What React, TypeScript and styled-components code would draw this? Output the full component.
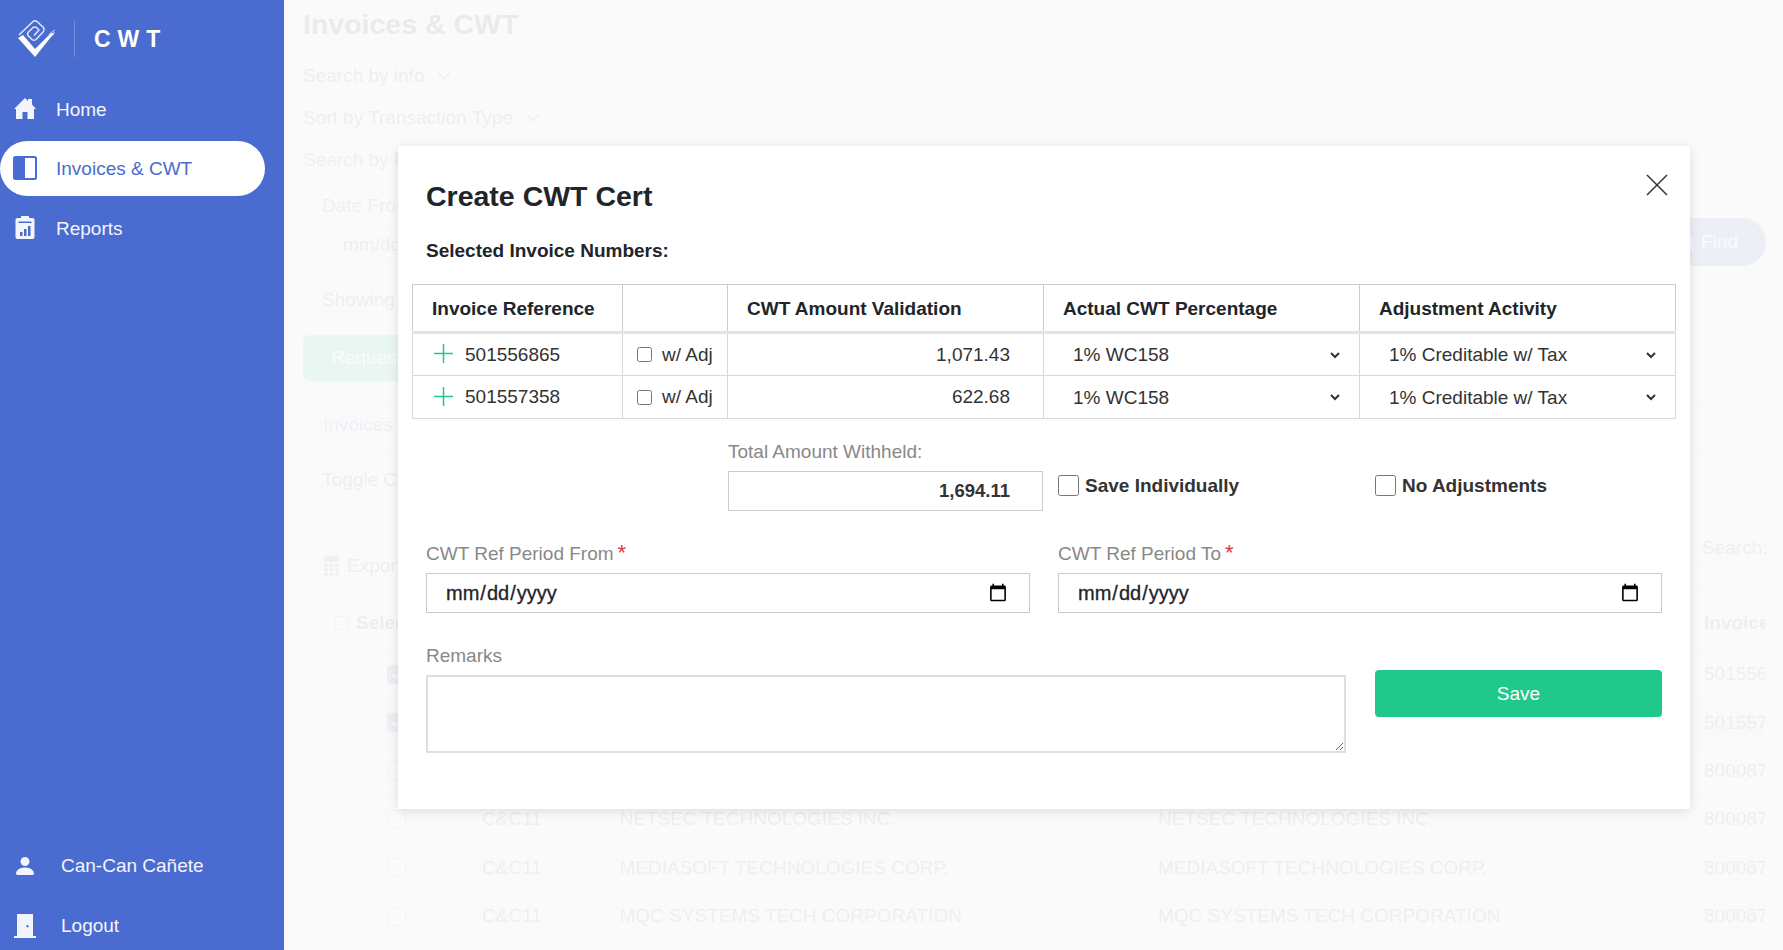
import React from "react";
import styled, { createGlobalStyle } from "styled-components";
import { BsPersonFill } from "react-icons/bs";
import { FiChevronDown, FiSearch } from "react-icons/fi";

const BLUE = "#4a6bcf";
const GREEN = "#20c98b";

const GlobalStyle = createGlobalStyle`
  html, body {
    margin: 0;
    padding: 0;
    height: 950px;
    overflow: hidden;
    background: #fff;
    font-family: "Liberation Sans", Arial, sans-serif;
    font-size: 19px;
    color: #212529;
  }
  * { box-sizing: border-box; }
`;

const Root = styled.div`
  display: flex;
  width: 1783px;
  height: 950px;
`;

const Sidebar = styled.aside`
  width: 284px;
  flex: none;
  height: 950px;
  display: flex;
  flex-direction: column;
  background: ${BLUE};
  color: #f3f5fc;
`;

const Brand = styled.div`
  height: 82px;
  display: flex;
  align-items: center;
  padding: 0 0 4px 16px;
`;

const BrandDivider = styled.div`
  width: 1px;
  height: 36px;
  margin: 0 19px 0 18px;
  background: rgba(255, 255, 255, 0.25);
`;

const BrandName = styled.div`
  font-size: 23px;
  font-weight: 700;
  letter-spacing: 7px;
  color: #fff;
`;

const NavList = styled.nav`
  display: flex;
  flex-direction: column;
  gap: 4.5px;
`;

const BottomNav = styled.div`
  margin-top: auto;
  display: flex;
  flex-direction: column;
  gap: 12px;
`;

const NavItem = styled.div<{ $active?: boolean; $bottom?: boolean }>`
  width: 265px;
  height: ${(p) => (p.$bottom ? "48px" : "55px")};
  display: flex;
  align-items: center;
  gap: ${(p) => (p.$bottom ? "24px" : "19px")};
  padding-left: 13px;
  padding-top: ${(p) => (p.$active ? "2px" : "0")};
  margin: ${(p) => (p.$active ? "-1px 0 1px" : "0")};
  background: ${(p) => (p.$active ? "#fff" : "transparent")};
  color: ${(p) => (p.$active ? BLUE : "inherit")};
  border-radius: 28px;

  > svg {
    width: 24px;
    height: 24px;
    flex: none;
    margin-top: ${(p) => (p.$active ? "-2px" : p.$bottom ? "-1px" : "-3px")};
  }
`;

const Main = styled.main`
  position: relative;
  flex: 1;
  height: 950px;
  overflow: hidden;
  background: #fff;
  padding: 6px 18px 0 19px;
`;

const PageTitle = styled.h1`
  margin: 0 0 13px;
  font-size: 28.5px;
  line-height: 36px;
  font-weight: 700;
`;

const FilterToggle = styled.div<{ $blue?: boolean }>`
  height: 42px;
  display: flex;
  align-items: center;
  gap: 9px;
  color: ${(p) => (p.$blue ? BLUE : "#555")};

  > svg {
    width: 22px;
    height: 22px;
    stroke-width: 1.4;
  }
`;

const DateRow = styled.div`
  display: flex;
  justify-content: space-between;
  align-items: flex-end;
  padding-left: 19px;
  margin-top: 14px;
  margin-right: -1px;
`;

const FieldLabel = styled.div`
  line-height: 22px;
  margin-bottom: 9px;
  color: #666;
`;

const BgInput = styled.div`
  width: 300px;
  height: 38px;
  margin-bottom: 2px;
  padding-left: 20px;
  display: flex;
  align-items: center;
  border: 1px solid #ccc;
  color: #555;
`;

const FindButton = styled.div`
  width: 130px;
  height: 48px;
  padding-right: 28px;
  display: flex;
  align-items: center;
  justify-content: flex-end;
  gap: 5px;
  border-radius: 24px;
  background: ${BLUE};
  color: #fff;
`;

const ShowingText = styled.div`
  margin: 23px 0 0 19px;
  line-height: 22px;
  color: #555;
`;

const RequestButton = styled.div`
  width: 260px;
  height: 46px;
  margin-top: 24px;
  padding-left: 28px;
  display: flex;
  align-items: center;
  border-radius: 6px;
  background: ${GREEN};
  color: #fff;
`;

const TabPanel = styled.div`
  height: 50px;
  margin-top: 19px;
  padding-left: 19px;
  display: flex;
  align-items: center;
  border: 1px solid #ddd;
  color: ${BLUE};
`;

const ToggleText = styled.div`
  margin: 19px 0 0 19px;
  line-height: 22px;
  color: #555;
`;

const TableTools = styled.div`
  display: flex;
  justify-content: space-between;
  align-items: flex-start;
  padding-left: 21px;
  margin-top: 47px;
  height: 58.5px;
`;

const ExportLink = styled.div`
  display: flex;
  align-items: center;
  gap: 8px;
  color: #555;
  margin-top: 17px;
`;

const SearchBox = styled.div`
  margin-top: -1px;
  width: 82px;
  margin-right: -7px;
  padding-left: 12px;
  color: #555;
`;

const SearchField = styled.div`
  height: 28px;
  margin: 5px 0 0 -12px;
  border: 1px solid #ddd;
`;

const BgTable = styled.div`
  margin: 0 0 0 19px;
  width: 1443px;
  overflow: hidden;
`;

const BgRow = styled.div<{ $header?: boolean; $shaded?: boolean }>`
  display: grid;
  grid-template-columns: 160px 137.5px 538.5px 546px 61px;
  align-items: center;
  height: ${(p) => (p.$header ? "54px" : "48.4px")};
  border-bottom: 1px solid #ccc;
  background: ${(p) => (p.$shaded ? "#e9e9e9" : "transparent")};
  color: #555;
  font-weight: ${(p) => (p.$header ? 700 : 400)};
  white-space: nowrap;
`;

const SelectAll = styled.div`
  display: flex;
  align-items: center;
  gap: 7px;
  padding-left: 13px;
`;

const CheckCell = styled.div`
  padding-left: 65px;
`;

const BgCheck = styled.div<{ $checked?: boolean; $small?: boolean }>`
  width: ${(p) => (p.$small ? "14px" : "19px")};
  height: ${(p) => (p.$small ? "14px" : "19px")};
  display: flex;
  align-items: center;
  justify-content: center;
  border-radius: 3px;
  border: 1px solid ${(p) => (p.$checked ? BLUE : "#999")};
  background: ${(p) => (p.$checked ? BLUE : "#fff")};

  > svg {
    width: 13px;
    height: 13px;
  }
`;

const Backdrop = styled.div`
  position: absolute;
  inset: 0;
  padding: 146px 93px 0 114px;
  background: rgba(250, 250, 250, 0.93);
`;

const Modal = styled.section`
  padding: 32px 28px 56px 28px;
  background: #fff;
  box-shadow: 0 2px 10px rgba(0, 0, 0, 0.12);
  position: relative;
`;

const CloseButton = styled.div`
  position: absolute;
  top: 28px;
  right: 22px;
  width: 22px;
  height: 22px;
  color: #333;

  > svg {
    display: block;
    width: 22px;
    height: 22px;
  }
`;

const ModalTitle = styled.h2`
  margin: 0;
  font-size: 28.5px;
  line-height: 36px;
  font-weight: 700;
  color: #212529;
`;

const SubTitle = styled.div`
  margin-top: 26px;
  font-size: 19px;
  line-height: 22px;
  font-weight: 700;
  color: #212529;
`;

const InvoiceTable = styled.table`
  margin: 22px -14px 0 -14px;
  width: 1263px;
  table-layout: fixed;
  border-collapse: collapse;
  border: 1px solid #ccc;
  font-size: 19px;
`;

const Th = styled.th`
  height: 48px;
  padding: 2px 19px 0;
  text-align: left;
  font-size: 19px;
  font-weight: 700;
  border: 1px solid #ccc;
  border-bottom: 3px solid #e4e4e4;
`;

const Td = styled.td<{ $right?: boolean }>`
  height: 43px;
  padding: 0;
  border: 1px solid #d8d8d8;
  color: #333;
  text-align: ${(p) => (p.$right ? "right" : "left")};
  padding-right: ${(p) => (p.$right ? "33px" : "0")};
`;

const RefCell = styled.div`
  display: flex;
  align-items: center;
  gap: 12px;
  padding-left: 21px;
`;

const PlusIcon = styled.svg`
  width: 19px;
  height: 19px;
  flex: none;
  margin-top: -2px;
  color: ${GREEN};
`;

const AdjLabel = styled.label`
  display: flex;
  align-items: center;
  gap: 10px;
  padding-left: 14px;

  > input {
    margin: 0;
    width: 15px;
    height: 15px;
  }
`;

const CellSelect = styled.select`
  display: block;
  width: calc(100% - 16px);
  height: 38px;
  padding: 0 0 0 25px;
  border: none;
  outline: none;
  background: #fff;
  color: #333;
  font-family: inherit;
  font-size: 19px;
`;

const TotalsRow = styled.div`
  display: flex;
  align-items: flex-end;
  gap: 15px;
  margin-top: 22px;
  padding-left: 302px;
`;

const TotalField = styled.div`
  width: 315px;
  flex: none;
`;

const Label = styled.div`
  margin-bottom: 8px;
  line-height: 22px;
  font-size: 19px;
  color: #888;

  > span {
    margin-left: 4px;
    color: #dc3545;
    font-size: 22px;
    line-height: 18px;
  }
`;

const TotalInput = styled.input`
  display: block;
  width: 100%;
  height: 40px;
  padding: 0 32px 0 0;
  border: 1px solid #ccc;
  outline: none;
  background: #fff;
  text-align: right;
  font-family: inherit;
  font-size: 18.5px;
  font-weight: 700;
  color: #333;
`;

const SaveOption = styled.label`
  width: 302px;
  flex: none;
  height: 29px;
  margin-bottom: 11px;
  display: flex;
  align-items: center;
  gap: 6px;
  font-size: 19px;
  font-weight: 700;
  color: #333;

  > input {
    margin: 0;
    width: 21px;
    height: 21px;
  }
`;

const PeriodRow = styled.div`
  display: grid;
  grid-template-columns: 1fr 1fr;
  gap: 28px;
  margin-top: 32px;
`;

const DateInput = styled.input`
  display: block;
  width: 100%;
  height: 40px;
  padding: 0 19px 0 18px;
  border: 1px solid #ccc;
  outline: none;
  background: #fff;
  font-family: inherit;
  font-size: 20px;
  -webkit-text-stroke: 0.3px #212529;
  color: #212529;
`;

const RemarksRow = styled.div`
  display: grid;
  grid-template-columns: 920px 287px;
  gap: 29px;
  margin-top: 32px;
`;

const RemarksInput = styled.textarea`
  display: block;
  width: 100%;
  height: 78px;
  border: 2px solid #dedede;
  outline: none;
  background: #fff;
`;

const SaveButton = styled.button`
  height: 47px;
  margin-top: 25px;
  border: none;
  border-radius: 4px;
  background: ${GREEN};
  color: #fff;
  font-family: inherit;
  font-size: 19px;
`;

function Logo() {
  return (
    <svg width="40" height="40" viewBox="0 0 40 40" fill="none">
      <path d="M2 19 L19 38 L39 13 L34 15 L19 30 L7 16 Z" fill="#fff" />
      <path
        d="M3 16 L17 2.500 Q19 1 21 2.500 L27.500 8.500 Q29 10.500 27.500 12.500 L20 20.500 Q18 22 16 20.500 L12 16.500 Q11 15 12 13.500 L17 8.500 Q19 7.500 20.500 8.500 L23 11 L18 16.500"
        stroke="#fff"
        strokeOpacity="0.85"
        strokeWidth="1.500"
      />
      <path d="M33 15 L39 11 M34 18 L38 15" stroke="#fff" strokeOpacity="0.7" />
    </svg>
  );
}

function HomeIcon() {
  return (
    <svg viewBox="0 0 24 24" fill="currentColor">
      <path d="M12 2 L15 5 V3 H19 V8.500 L23 13 H21 V23 H14.500 V16 H9.500 V23 H3 V13 H1 Z" />
    </svg>
  );
}

function PanelIcon() {
  return (
    <svg viewBox="0 0 24 24" fill="currentColor">
      <path
        d="M2.500 0 H21.500 A2.500 2.500 0 0 1 24 2.500 V21.500 A2.500 2.500 0 0 1 21.500 24 H2.500 A2.500 2.500 0 0 1 0 21.500 V2.500 A2.500 2.500 0 0 1 2.500 0 Z M12 2 V22 H21 A1 1 0 0 0 22 21 V3 A1 1 0 0 0 21 2 Z"
        fillRule="evenodd"
      />
    </svg>
  );
}

function ReportIcon() {
  return (
    <svg viewBox="0 0 24 24" fill="currentColor">
      <path
        d="M8 1 H16 V3 H19.500 A2 2 0 0 1 21.500 5 V22 A2 2 0 0 1 19.500 24 H4.500 A2 2 0 0 1 2.500 22 V5 A2 2 0 0 1 4.500 3 H8 Z M5.500 6.500 V8 H18.500 V6.500 Z M7 17 V21 H9.500 V17 Z M11 14 V21 H13.500 V14 Z M15 11 V21 H17.500 V11 Z"
        fillRule="evenodd"
      />
    </svg>
  );
}

function DoorIcon() {
  return (
    <svg viewBox="0 0 24 24" fill="currentColor">
      <path
        d="M4 0 H20 V22 H23 V24 H1 V22 H4 Z M14.500 11 A1.200 1.200 0 1 0 14.501 11 Z"
        fillRule="evenodd"
      />
    </svg>
  );
}

function CheckMark() {
  return (
    <svg viewBox="0 0 16 16" fill="none" stroke="#fff" strokeWidth="2.500">
      <path d="M3 8 L7 12 L13 4" />
    </svg>
  );
}

function GridIcon() {
  return (
    <svg width="15" height="20" viewBox="0 0 15 20" fill="#777">
      <path d="M0 2 A2 2 0 0 1 2 0 H13 A2 2 0 0 1 15 2 V6 H0 Z" />
      <path d="M0 8 H4 V11 H0 Z M5.500 8 H9.500 V11 H5.500 Z M11 8 H15 V11 H11 Z M0 12.500 H4 V15.500 H0 Z M5.500 12.500 H9.500 V15.500 H5.500 Z M11 12.500 H15 V15.500 H11 Z M0 17 H4 V20 H0 Z M5.500 17 H9.500 V20 H5.500 Z M11 17 H15 V20 H11 Z" />
    </svg>
  );
}

const BG_ROWS = [
  { number: "501556865", name: "", checked: true },
  { number: "501557358", name: "", checked: true, shaded: true },
  { number: "800087", name: "" },
  { number: "800087", name: "NETSEC TECHNOLOGIES INC." },
  { number: "800087", name: "MEDIASOFT TECHNOLOGIES CORP." },
  { number: "800087", name: "MQC SYSTEMS TECH CORPORATION" },
];

const INVOICES = [
  { ref: "501556865", amount: "1,071.43" },
  { ref: "501557358", amount: "622.68" },
];

export default function App(): JSX.Element {
  return (
    <Root>
      <GlobalStyle />
      <Sidebar>
        <Brand>
          <Logo />
          <BrandDivider />
          <BrandName>CWT</BrandName>
        </Brand>
        <NavList>
          <NavItem>
            <HomeIcon />
            Home
          </NavItem>
          <NavItem $active>
            <PanelIcon />
            Invoices &amp; CWT
          </NavItem>
          <NavItem>
            <ReportIcon />
            Reports
          </NavItem>
        </NavList>
        <BottomNav>
          <NavItem $bottom>
            <BsPersonFill />
            Can-Can Cañete
          </NavItem>
          <NavItem $bottom>
            <DoorIcon />
            Logout
          </NavItem>
        </BottomNav>
      </Sidebar>

      <Main>
        <PageTitle>Invoices &amp; CWT</PageTitle>
        <FilterToggle>
          Search by info <FiChevronDown />
        </FilterToggle>
        <FilterToggle>
          Sort by Transaction Type <FiChevronDown />
        </FilterToggle>
        <FilterToggle $blue>Search by Date</FilterToggle>
        <DateRow>
          <div>
            <FieldLabel>Date From</FieldLabel>
            <BgInput>mm/dd/yyyy</BgInput>
          </div>
          <FindButton>
            <FiSearch />
            Find
          </FindButton>
        </DateRow>
        <ShowingText>Showing</ShowingText>
        <RequestButton>Request</RequestButton>
        <TabPanel>Invoices</TabPanel>
        <ToggleText>Toggle Columns</ToggleText>
        <TableTools>
          <ExportLink>
            <GridIcon />
            Export
          </ExportLink>
          <SearchBox>
            Search:
            <SearchField />
          </SearchBox>
        </TableTools>
        <BgTable>
          <BgRow $header>
            <SelectAll>
              <BgCheck $small />
              Select
            </SelectAll>
            <div />
            <div />
            <div />
            <div>Invoice</div>
          </BgRow>
          {BG_ROWS.map((row, i) => (
            <BgRow key={i} $shaded={row.shaded}>
              <CheckCell>
                <BgCheck $checked={row.checked}>{row.checked && <CheckMark />}</BgCheck>
              </CheckCell>
              <div>C&amp;C11</div>
              <div>{row.name}</div>
              <div>{row.name}</div>
              <div>{row.number}</div>
            </BgRow>
          ))}
        </BgTable>

        <Backdrop>
          <Modal>
            <CloseButton>
              <svg viewBox="0 0 22 22" stroke="currentColor" strokeWidth="1.500" fill="none">
                <path d="M1 1 L21 21 M21 1 L1 21" />
              </svg>
            </CloseButton>
            <ModalTitle>Create CWT Cert</ModalTitle>
            <SubTitle>Selected Invoice Numbers:</SubTitle>
            <InvoiceTable>
              <colgroup>
                <col width="210" />
                <col width="105" />
                <col width="316" />
                <col width="316" />
                <col width="316" />
              </colgroup>
              <thead>
                <tr>
                  <Th>Invoice Reference</Th>
                  <Th />
                  <Th>CWT Amount Validation</Th>
                  <Th>Actual CWT Percentage</Th>
                  <Th>Adjustment Activity</Th>
                </tr>
              </thead>
              <tbody>
                {INVOICES.map((invoice) => (
                  <tr key={invoice.ref}>
                    <Td>
                      <RefCell>
                        <PlusIcon viewBox="0 0 19 19" stroke="currentColor" strokeWidth="1.500">
                          <path d="M9.500 0 V19 M0 9.500 H19" />
                        </PlusIcon>
                        {invoice.ref}
                      </RefCell>
                    </Td>
                    <Td>
                      <AdjLabel>
                        <input type="checkbox" />
                        w/ Adj
                      </AdjLabel>
                    </Td>
                    <Td $right>{invoice.amount}</Td>
                    <Td>
                      <CellSelect defaultValue="wc158">
                        <option value="wc158">1% WC158</option>
                      </CellSelect>
                    </Td>
                    <Td>
                      <CellSelect defaultValue="tax">
                        <option value="tax">1% Creditable w/ Tax</option>
                      </CellSelect>
                    </Td>
                  </tr>
                ))}
              </tbody>
            </InvoiceTable>

            <TotalsRow>
              <TotalField>
                <Label>Total Amount Withheld:</Label>
                <TotalInput readOnly value="1,694.11" />
              </TotalField>
              <SaveOption>
                <input type="checkbox" />
                Save Individually
              </SaveOption>
              <SaveOption>
                <input type="checkbox" />
                No Adjustments
              </SaveOption>
            </TotalsRow>

            <PeriodRow>
              <div>
                <Label>
                  CWT Ref Period From<span>*</span>
                </Label>
                <DateInput type="date" />
              </div>
              <div>
                <Label>
                  CWT Ref Period To<span>*</span>
                </Label>
                <DateInput type="date" />
              </div>
            </PeriodRow>

            <RemarksRow>
              <div>
                <Label>Remarks</Label>
                <RemarksInput />
              </div>
              <SaveButton>Save</SaveButton>
            </RemarksRow>
          </Modal>
        </Backdrop>
      </Main>
    </Root>
  );
}
